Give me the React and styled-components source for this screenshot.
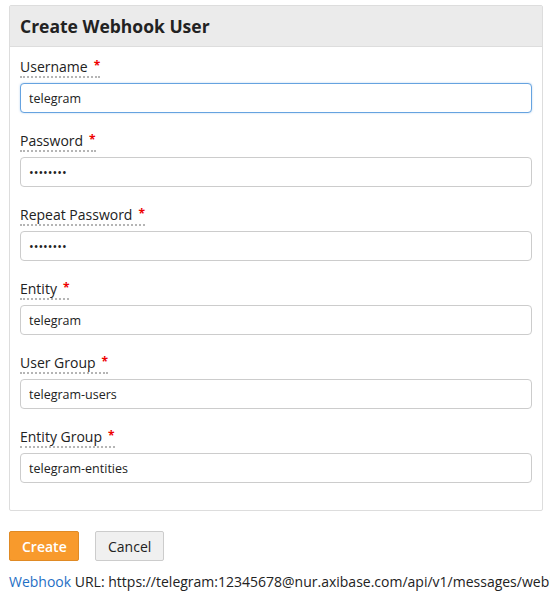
import React from "react";
import styled, { createGlobalStyle } from "styled-components";

const GlobalStyle = createGlobalStyle`
  html, body {
    margin: 0;
    padding: 0;
    background: #fff;
    overflow: hidden;
  }
  body {
    font-family: "Open Sans", "Liberation Sans", sans-serif;
    color: #222;
  }
`;

const Page = styled.div`
  padding: 5px 7px 0 9px;
  width: 534px;
`;

const Panel = styled.div`
  border: 1px solid #ddd;
  border-radius: 2px;
  background: #fff;
`;

const PanelHeader = styled.div`
  background: #ebebeb;
  border-bottom: 1px solid #ddd;
  height: 40px;
  display: flex;
  align-items: center;
  padding: 0 10px;
  h2 {
    margin: 0;
    font-size: 17.5px;
    font-weight: 700;
    color: #222;
  }
`;

const PanelBody = styled.div`
  padding: 11px 10px 27px;
  display: flex;
  flex-direction: column;
  gap: 19px;
`;

const Field = styled.div`
  display: flex;
  flex-direction: column;
  align-items: flex-start;
  gap: 5px;
`;

const Label = styled.label`
  font-size: 14px;
  line-height: 17px;
  color: #222;
  border-bottom: 2px dotted #b5b5b5;
  padding-bottom: 1px;
  span {
    color: #e00;
    margin-left: 6px;
    font-size: 12px;
    font-weight: 700;
    vertical-align: top;
    position: relative;
    top: -1px;
  }
`;

const Input = styled.input`
  box-sizing: border-box;
  width: 100%;
  height: 30px;
  border: 1px solid ${(p) => (p.$focus ? "#66a3e0" : "#ccc")};
  border-radius: 4px;
  padding: 0 8px;
  font-family: "Open Sans", "Liberation Sans", sans-serif;
  font-size: 12.5px;
  color: #222;
  outline: none;
  box-shadow: ${(p) => (p.$focus ? "0 0 2px rgba(102,163,224,0.5)" : "none")};
`;

const Actions = styled.div`
  display: flex;
  gap: 16px;
  margin-top: 20px;
`;

const Button = styled.button`
  height: 30px;
  padding: 0 12px;
  font-family: "Open Sans", "Liberation Sans", sans-serif;
  font-size: 14px;
  border-radius: 2px;
  border: 1px solid ${(p) => (p.$primary ? "#e08a24" : "#ccc")};
  background: ${(p) => (p.$primary ? "#f89a2c" : "#f0f0f0")};
  color: ${(p) => (p.$primary ? "#fff" : "#222")};
  font-weight: ${(p) => (p.$primary ? 600 : 400)};
  width: ${(p) => (p.$primary ? "70px" : "69px")};
`;

const UrlLine = styled.div`
  margin-top: 11px;
  font-size: 14px;
  line-height: 20px;
  white-space: nowrap;
  color: #222;
  a {
    color: #1f6fc5;
    text-decoration: none;
  }
`;

const fields = [
  { label: "Username", value: "telegram", focus: true },
  { label: "Password", value: "telegram", type: "password" },
  { label: "Repeat Password", value: "telegram", type: "password" },
  { label: "Entity", value: "telegram" },
  { label: "User Group", value: "telegram-users" },
  { label: "Entity Group", value: "telegram-entities" },
];

export default function App() {
  return (
    <Page>
      <GlobalStyle />
      <Panel>
        <PanelHeader>
          <h2>Create Webhook User</h2>
        </PanelHeader>
        <PanelBody>
          {fields.map((f) => (
            <Field key={f.label}>
              <Label>
                {f.label}
                <span>*</span>
              </Label>
              <Input
                type={f.type || "text"}
                defaultValue={f.value}
                $focus={f.focus}
              />
            </Field>
          ))}
        </PanelBody>
      </Panel>
      <Actions>
        <Button $primary>Create</Button>
        <Button>Cancel</Button>
      </Actions>
      <UrlLine>
        <a href="#">Webhook</a> URL:
        https://telegram:12345678@nur.axibase.com/api/v1/messages/webhook/telegram
      </UrlLine>
    </Page>
  );
}
